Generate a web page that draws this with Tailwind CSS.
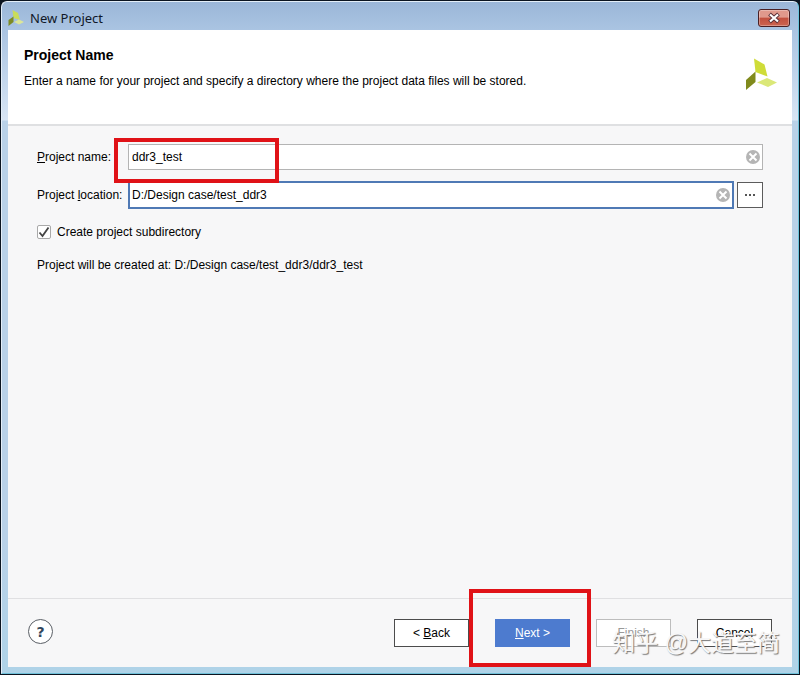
<!DOCTYPE html>
<html lang="en">
<head>
<meta charset="utf-8">
<meta name="viewport" content="width=device-width, initial-scale=1">
<title>New Project</title>
<script src="https://cdn.jsdelivr.net/npm/@tailwindcss/browser@4"></script>
</head>
<body class="bg-[#0b1420] font-['Liberation_Sans',Arial,sans-serif] text-xs text-black">
<div class="flex min-h-screen flex-col pt-px">
  <div class="mx-px mb-px flex grow flex-col rounded-t-md border border-[#e4eef8] border-r-[#6cc4dc] border-b-[#6fc0d8] bg-[linear-gradient(#9bb6d8,#aac4e2_28px,#d8e5f4_118px,#b9d1e8_119px,#b9d1e8_80%,#afd3e8)] px-1.5 pb-1.5">
    <header class="flex h-7 items-center gap-1.5 pt-1 pr-0.5">
      <svg class="size-4" viewBox="0 0 32 32" aria-hidden="true">
        <path d="M9 0l11 6 4 14-13-4z" fill="#c9dc5a"/>
        <path d="M1 20l10-7v11l-10 8z" fill="#7d8b22"/>
        <path d="M12 24l10-5 10 5-10 5z" fill="#dce79a"/>
      </svg>
      <h1 class="grow font-['Noto_Sans','Open_Sans',sans-serif] text-[13px] leading-5 text-[#101828]">New Project</h1>
      <button type="button" aria-label="Close" class="flex h-[18px] w-8 items-center justify-center rounded-[3px] border border-[#4a2024] bg-linear-to-b from-[#e0998c] from-45% via-[#c2503f] via-50% to-[#cc6450] inset-ring inset-ring-white/30">
        <svg class="h-3 w-3" viewBox="0 0 12 12" aria-hidden="true">
          <path d="M1.500 2l9 8M10.500 2l-9 8" stroke="#5a3038" stroke-width="4"/>
          <path d="M2 2.500l8 7M10 2.500l-8 7" stroke="#fff" stroke-width="2.200"/>
        </svg>
      </button>
    </header>

    <main class="flex grow flex-col bg-[#f7f7f8]">
      <section class="flex h-24 items-start justify-between border-b-2 border-[#dfe0e2] bg-white px-4 pt-[15px]">
        <div>
          <h2 class="text-sm leading-5 font-bold">Project Name</h2>
          <p class="mt-2 leading-4">Enter a name for your project and specify a directory where the project data files will be stored.</p>
        </div>
        <svg class="mt-[13px] -mr-px h-8 w-8 shrink-0" viewBox="0 0 32 32" aria-hidden="true">
          <path d="M9 0.500l10.500 6 3 12-12-4.500z" fill="#cfdc38"/>
          <path d="M1 22l9.500-8.500v10.500l-9.500 8z" fill="#808a1c"/>
          <path d="M12 24.500l10-4.500 10 4.500-9 4.500z" fill="#dbe878"/>
        </svg>
      </section>

      <form class="flex grow flex-col px-[29px] pt-[18px]">
        <div class="relative flex items-center">
          <label for="pname" class="w-[91px] shrink-0"><u>P</u>roject name:</label>
          <input id="pname" type="text" value="ddr3_test" class="h-[26px] min-w-0 grow border border-[#b4b4b4] bg-white pr-7 pl-[3px] outline-none">
          <button type="button" aria-label="Clear project name" class="absolute right-[3px] size-[14px]">
            <svg viewBox="0 0 14 14" aria-hidden="true"><circle cx="7" cy="7" r="7" fill="#b5b5b5"/><path d="M3.500 3.500l7 7M10.500 3.500l-7 7" stroke="#fff" stroke-width="2"/></svg>
          </button>
          <div class="pointer-events-none absolute -top-1.5 left-[77px] z-10 h-[45px] w-[165px] border-4 border-[#e01217]"></div>
        </div>
        <div class="mt-[11px] flex items-center gap-[3px]">
          <div class="relative flex min-w-0 grow items-center">
            <label for="ploc" class="w-[91px] shrink-0">Project <u>l</u>ocation:</label>
            <input id="ploc" type="text" value="D:/Design case/test_ddr3" class="h-7 min-w-0 grow border-2 border-[#4f79b5] bg-white pr-7 pl-0.5 outline-none">
            <button type="button" aria-label="Clear project location" class="absolute right-1 size-[14px]">
              <svg viewBox="0 0 14 14" aria-hidden="true"><circle cx="7" cy="7" r="7" fill="#b5b5b5"/><path d="M3.500 3.500l7 7M10.500 3.500l-7 7" stroke="#fff" stroke-width="2"/></svg>
            </button>
          </div>
          <button type="button" aria-label="Browse" class="flex size-[26px] items-center justify-center gap-0.5 border border-[#5c5c5c] bg-white">
            <span class="size-0.5 bg-[#555]"></span><span class="size-0.5 bg-[#555]"></span><span class="size-0.5 bg-[#555]"></span>
          </button>
        </div>
        <div class="mt-[15px] flex items-center gap-1.5">
          <span class="relative size-[14px]">
            <input id="subdir" type="checkbox" checked class="block size-[14px] appearance-none rounded-[2px] border border-[#a9a9a9] bg-white">
            <svg class="pointer-events-none absolute inset-0" viewBox="0 0 14 14" fill="none" aria-hidden="true"><path d="M2.500 7.500l3 3.500 6-8.500" stroke="#444" stroke-width="1.800"/></svg>
          </span>
          <label for="subdir" class="leading-4">Create project subdirectory</label>
        </div>
        <p class="mt-[17px] leading-4">Project will be created at: D:/Design case/test_ddr3/ddr3_test</p>
      </form>

      <footer class="relative flex items-start justify-between border-t border-[#e0e0e2] px-5 py-5">
        <button type="button" aria-label="Help" class="flex size-[25px] items-center justify-center rounded-full border border-[#5a5f66] bg-white font-['DejaVu_Sans',sans-serif] text-sm font-bold text-[#31465c]">?</button>
        <div class="flex gap-[26px]">
          <button type="button" class="h-7 w-[75px] border border-[#4c4c4c] bg-white">&lt; <u>B</u>ack</button>
          <div class="relative">
            <button type="button" class="h-7 w-[75px] bg-[#4d7bcf] text-white"><u>N</u>ext &gt;</button>
            <div class="pointer-events-none absolute -top-[30px] -left-[26px] z-10 h-[78px] w-[122px] border-4 border-[#e01217]"></div>
          </div>
          <button type="button" disabled class="h-7 w-[75px] border border-[#bdbdbd] bg-white text-[#999]"><u>F</u>inish</button>
          <button type="button" class="h-7 w-[75px] border border-[#4c4c4c] bg-white">Cancel</button>
        </div>
        <div class="pointer-events-none absolute right-3 bottom-1.5 z-20 font-['Liberation_Sans','Noto_Sans_CJK_SC',sans-serif] text-[23px] leading-9 whitespace-nowrap text-[#f7f7f8] text-shadow-[1px_1px_1px_#777777]" lang="zh">知乎 @大道至简</div>
      </footer>
    </main>
  </div>
</div>
</body>
</html>
